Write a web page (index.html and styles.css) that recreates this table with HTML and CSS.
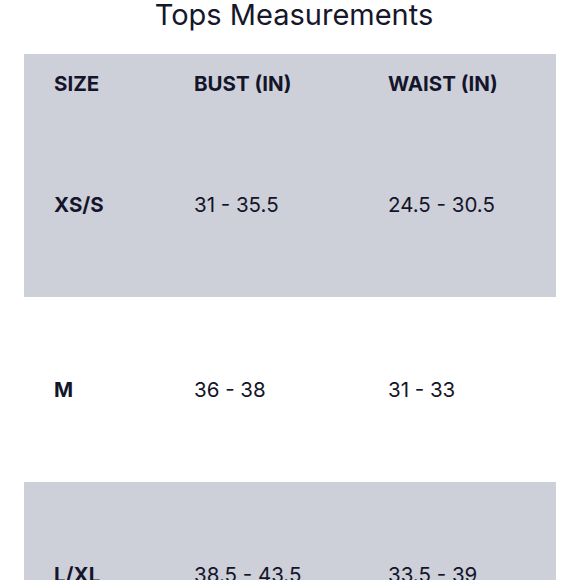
FILE: index.html
```html
<!DOCTYPE html>
<html>
<head>
<meta charset="utf-8">
<link rel="stylesheet" href="styles.css">
</head>
<body>
<h1 class="title">Tops Measurements</h1>
<table class="chart">
  <colgroup>
    <col class="c-size">
    <col class="c-bust">
    <col class="c-waist">
  </colgroup>
  <thead>
    <tr class="shaded head">
      <th>SIZE</th>
      <th>BUST (IN)</th>
      <th>WAIST (IN)</th>
    </tr>
  </thead>
  <tbody>
    <tr class="shaded row">
      <th>XS/S</th>
      <td>31 - 35.5</td>
      <td>24.5 - 30.5</td>
    </tr>
    <tr class="row">
      <th>M</th>
      <td>36 - 38</td>
      <td>31 - 33</td>
    </tr>
    <tr class="shaded row">
      <th>L/XL</th>
      <td>38.5 - 43.5</td>
      <td>33.5 - 39</td>
    </tr>
  </tbody>
</table>
</body>
</html>
```
FILE: styles.css
```css
html, body {
  margin: 0;
  padding: 0;
  background: #ffffff;
}
body {
  font-family: Inter, "Noto Sans", sans-serif;
  color: #14152a;
  overflow: hidden;
}
.title {
  margin: 0;
  font-size: 29px;
  font-weight: 400;
  line-height: 29px;
  text-align: center;
  padding-left: 8px;
  color: #16172b;
}
.chart {
  margin: 25px 0 0 24px;
  width: 532px;
  border-collapse: collapse;
  table-layout: fixed;
}
.c-size { width: 140px; }
.c-bust { width: 194px; }
.c-waist { width: 198px; }
.chart th, .chart td {
  padding: 0 0 0 30px;
  text-align: left;
  vertical-align: middle;
  font-size: 20.5px;
  white-space: nowrap;
}
.chart th {
  font-weight: 700;
  font-size: 20.5px;
}
.chart td {
  font-weight: 400;
}
.shaded {
  background: #cdcfd9;
}
.head {
  height: 58px;
}
.row {
  height: 185px;
}
```
